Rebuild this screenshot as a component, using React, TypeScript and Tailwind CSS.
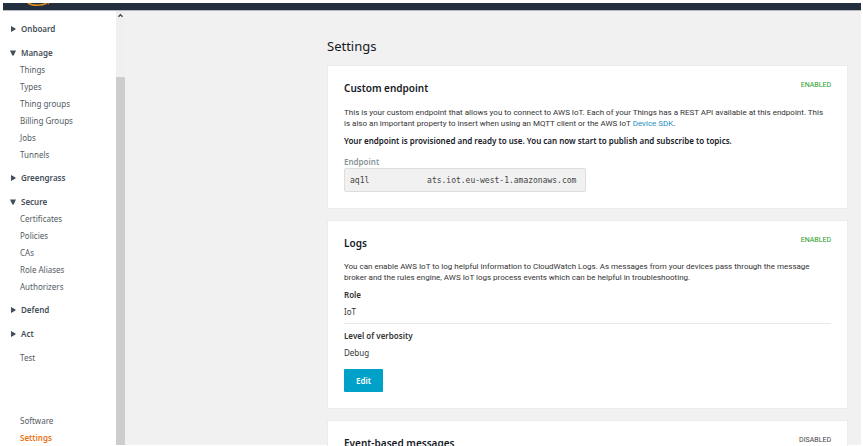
import type { ReactNode } from "react";

type Section = { label: string; open?: boolean; items?: string[] };

const sections: Section[] = [
  { label: "Onboard" },
  {
    label: "Manage",
    open: true,
    items: ["Things", "Types", "Thing groups", "Billing Groups", "Jobs", "Tunnels"],
  },
  { label: "Greengrass" },
  {
    label: "Secure",
    open: true,
    items: ["Certificates", "Policies", "CAs", "Role Aliases", "Authorizers"],
  },
  { label: "Defend" },
  { label: "Act" },
];

function Caret({ open }: { open?: boolean }) {
  return (
    <svg viewBox="0 0 6 6" className="h-[6px] w-[6px] shrink-0 fill-[#444f5a]" aria-hidden="true">
      {open ? <path d="M0 0.5H6L3.7 5.5H2.3Z" /> : <path d="M1 0L5.5 2.4V3.6L1 6Z" />}
    </svg>
  );
}

function NavLink({ label, active = false }: { label: string; active?: boolean }) {
  return (
    <a
      href="#"
      aria-current={active ? "page" : undefined}
      className={
        active
          ? "block h-[17px] pl-[10px] font-semibold leading-[17px] text-[#ec7211]"
          : "block h-[17px] pl-[10px] leading-[17px] text-[#545b64]"
      }
    >
      {label}
    </a>
  );
}

function Sidebar() {
  return (
    <nav className="flex w-[106px] shrink-0 flex-col pt-[9px] text-[8px]">
      {sections.map(({ label, open, items }) => (
        <div key={label} className={items ? "mb-[6px]" : "mb-[7px]"}>
          <button
            type="button"
            aria-expanded={!!open}
            className="flex h-[17px] items-center gap-[5px] font-semibold text-[#444f5a]"
          >
            <Caret open={open} />
            {label}
          </button>
          {items?.map((item) => <NavLink key={item} label={item} />)}
        </div>
      ))}
      <NavLink label="Test" />
      <div className="mt-[46px]">
        <NavLink label="Software" />
        <NavLink label="Settings" active />
      </div>
    </nav>
  );
}

function ScrollTrack() {
  return (
    <div className="flex w-[9px] shrink-0 flex-col bg-[#f0f0f0]">
      <svg viewBox="0 0 9 9" className="h-[9px] w-[9px]" fill="none" stroke="#404040" strokeWidth="1.3" aria-hidden="true">
        <path d="M2.5 5.8L4.5 3.6L6.5 5.8" />
      </svg>
      <div className="mt-[57px] flex-1 bg-[#cdcdcd]" />
    </div>
  );
}

type CardProps = { title: string; status: "ENABLED" | "DISABLED"; children?: ReactNode };

function Card({ title, status, children }: CardProps) {
  return (
    <section className="border border-[#ececec] bg-white px-4 pt-[14px] pb-4">
      <header className="flex items-start justify-between">
        <h2 className="pt-px font-['Noto_Sans',sans-serif] text-[10px] font-semibold leading-[14px] text-[#16191f]">
          {title}
        </h2>
        <span
          className={
            status === "ENABLED" ? "text-[7px] leading-[10px] text-[#1d9c1d]" : "text-[7px] leading-[10px] text-[#444444]"
          }
        >
          {status}
        </span>
      </header>
      {children}
    </section>
  );
}

export default function App() {
  return (
    <div className="flex h-screen flex-col overflow-hidden bg-white pt-[3px] pr-[2px] pb-px pl-[3px] font-['Noto_Sans',sans-serif] text-[#333333]">
      <header className="h-2 shrink-0 border-b border-[#b5b8bd] bg-[#232f3e] pl-[22px]">
        <svg viewBox="0 0 28 4" className="h-1 w-7" fill="none" stroke="#e08e1b" aria-hidden="true">
          <path d="M3 0C7 3 17 3 22 0" strokeWidth="1.6" />
          <path d="M23 1.5L24 0" />
        </svg>
      </header>
      <div className="flex min-h-0 flex-1">
        <div className="flex shrink-0 pl-[7px]">
          <Sidebar />
          <ScrollTrack />
        </div>
        <main className="min-w-0 flex-1 bg-[#f1f1f1] pt-[25px] pr-[13px] pl-[202px]">
          <h1 className="text-[13px] leading-5 text-[#16191f]">Settings</h1>
          <div className="mt-[9px] flex flex-col gap-[11px] font-['Roboto',sans-serif]">
            <Card title="Custom endpoint" status="ENABLED">
              <p className="mt-3 text-[8px] leading-[11px]">
                This is your custom endpoint that allows you to connect to AWS IoT. Each of your Things has a REST API
                available at this endpoint. This is also an important property to insert when using an MQTT client or
                the AWS IoT{" "}
                <a href="#" className="text-[#1a8fc0]">
                  Device SDK
                </a>
                .
              </p>
              <p className="mt-[6px] font-['Noto_Sans',sans-serif] text-[8px] font-semibold leading-[11px] text-[#16191f]">
                Your endpoint is provisioned and ready to use. You can now start to publish and subscribe to topics.
              </p>
              <label
                htmlFor="endpoint"
                className="mt-[10px] block font-['Noto_Sans',sans-serif] text-[8px] font-semibold leading-[11px] text-[#879596]"
              >
                Endpoint
              </label>
              <input
                id="endpoint"
                readOnly
                value={"aq1l" + "\u00a0".repeat(12) + "ats.iot.eu-west-1.amazonaws.com"}
                className="mt-px block h-6 w-[242px] rounded-[2px] border border-[#dddddd] bg-[#f1f1f1] px-[5px] font-['DejaVu_Sans_Mono',monospace] text-[8px] text-[#444444]"
              />
            </Card>
            <Card title="Logs" status="ENABLED">
              <p className="mt-[11px] text-[8px] leading-[11px]">
                You can enable AWS IoT to log helpful information to CloudWatch Logs. As messages from your devices pass
                through the message broker and the rules engine, AWS IoT logs process events which can be helpful in
                troubleshooting.
              </p>
              <dl className="font-['Noto_Sans',sans-serif] text-[8px] leading-[11px]">
                <dt className="mt-[6px] font-semibold">Role</dt>
                <dd className="mt-[6px]">IoT</dd>
                <dt className="mt-[6px] border-t border-[#e6e8e8] pt-[6px] font-semibold">Level of verbosity</dt>
                <dd className="mt-[6px]">Debug</dd>
              </dl>
              <button
                type="button"
                className="mt-[11px] block h-[23px] w-[39px] rounded-[1px] bg-[#00a1c9] font-['Noto_Sans',sans-serif] text-[8px] font-semibold text-white"
              >
                Edit
              </button>
            </Card>
            <Card title="Event-based messages" status="DISABLED" />
          </div>
        </main>
      </div>
    </div>
  );
}
